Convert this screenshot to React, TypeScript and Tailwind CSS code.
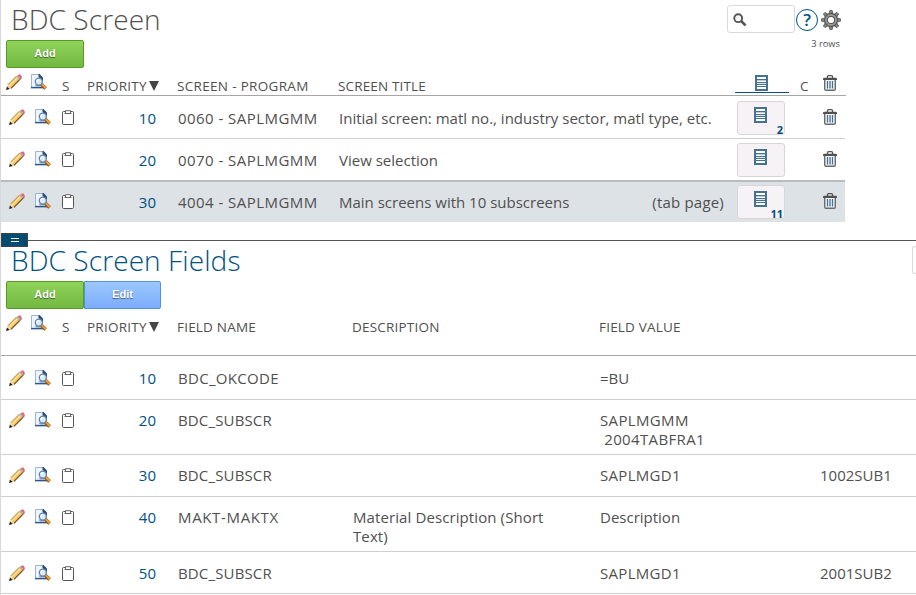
import React from "react";

const Pencil = () => (
  <svg width="16" height="16" viewBox="0 0 16 16" className="block shrink-0">
    <path d="M1 15.2 1.9 10.8 10.4 2.2 13.8 5.6 5.2 14.2Z" fill="#f7c766" />
    <path d="M1.8 10.8 10.6 2" stroke="#a8782f" strokeWidth="0.9" />
    <path d="M2.9 12.1 11.3 3.6" stroke="#ffe6a0" strokeWidth="1.3" />
    <path d="M5 14.3 13.9 5.4" stroke="#6e4a1c" strokeWidth="1.2" />
    <path d="M10.2 2.6 11.5 1.3 14.7 4.5 13.4 5.8Z" fill="#a9b0b8" />
    <path d="M11.5 1.4Q12.8 -.1 14.4.6L15.4 1.7Q16.2 3.3 14.7 4.6Z" fill="#e8686c" />
    <path d="M13.6 5.9 15.7 3.6" stroke="#7a2c30" strokeWidth="0.9" />
    <path d="M.6 15.6 1.9 11.2 5 14.2Z" fill="#ecd9b5" />
    <path d="M.1 16 .9 12.6 3.7 15.1Z" fill="#1d1d1d" />
  </svg>
);

const Preview = () => (
  <svg width="16" height="16" viewBox="0 0 16 16" className="block shrink-0">
    <path d="M.5.5H8L11.5 4V13.5H.5Z" fill="#eef5fd" stroke="#9db6d8" />
    <path d="M7.5 0H8.5L12 3.5V7L7.5 3Z" fill="#2c4d78" />
    <path d="M0 13.6H12" stroke="#2f5686" strokeWidth="1.5" />
    <path d="M3.6 10.6 5 12.5H9.5L10 11" fill="#7f9dc0" />
    <circle cx="7.8" cy="7.6" r="3.5" fill="#d9ecfb" stroke="#6482a6" strokeWidth="1.3" />
    <path d="M6 7.4Q6.3 5.6 8 5.6" stroke="#fff" strokeWidth="1.2" fill="none" />
    <path d="M10.6 10.6 14.6 14.6" stroke="#8a5417" strokeWidth="3.6" />
    <path d="M11 10.4 14.8 14.2" stroke="#f0a03a" strokeWidth="2" />
  </svg>
);

const Clipboard = () => (
  <svg width="13" height="16" viewBox="0 0 13 16" className="block shrink-0">
    <rect x="0.5" y="1.5" width="11" height="13" rx="1.2" fill="#fff" stroke="#555" />
    <rect x="3" y="0" width="6" height="3.5" fill="#fff" />
    <path d="M2.5 3.5H9.5M3.5 3V.7H8.5V3" stroke="#555" fill="none" strokeWidth="0.9" />
  </svg>
);

const List = () => (
  <svg width="13" height="16" viewBox="0 0 13 16" className="block shrink-0" shapeRendering="crispEdges">
    <rect width="13" height="16" fill="#457193" />
    <rect x="2" y="2" width="9" height="2" fill="#fff" />
    <rect x="2" y="5" width="9" height="1" fill="#b9cad7" />
    <rect x="2" y="6" width="9" height="1" fill="#fff" />
    <rect x="2" y="8" width="9" height="1" fill="#dfe7ed" />
    <rect x="2" y="10" width="9" height="1" fill="#fff" />
    <rect x="2" y="12" width="9" height="2" fill="#fff" />
  </svg>
);

const Trash = () => (
  <svg width="14" height="16" viewBox="0 0 14 16" className="block shrink-0">
    <path d="M4.5 3V1.6Q4.5 .7 5.4.7H8.6Q9.5 .7 9.5 1.6V3" fill="none" stroke="#555" strokeWidth="1.3" />
    <path d="M0 5V4Q0 2.7 1.5 2.7H12.5Q14 2.7 14 4V5Z" fill="#505050" />
    <path d="M1.7 5V14Q1.7 15.3 3 15.3H11Q12.3 15.3 12.3 14V5" fill="#f4f6f8" stroke="#6a6a6a" strokeWidth="1.4" />
    <path d="M4.5 6V13.5M7 6V13.5M9.5 6V13.5" stroke="#457193" strokeWidth="1.3" />
  </svg>
);

const Gear = () => (
  <svg width="20" height="20" viewBox="-10 -10 20 20" className="block">
    {[0, 45, 90, 135, 180, 225, 270, 315].map((a) => (
      <path key={a} d="M-2-6-1.1-9.6H1.1L2-6Z" transform={`rotate(${a})`} fill="#858585" stroke="#505050" strokeWidth=".8" />
    ))}
    <circle r="5" fill="none" stroke="#505050" strokeWidth="3.8" />
    <circle r="5" fill="none" stroke="#979797" strokeWidth="2" />
  </svg>
);

const Button = ({ label, blue = false }: { label: string; blue?: boolean }) => (
  <button
    className={`h-7 border pb-0.5 font-['Liberation_Sans',Arial,sans-serif] text-[11px] font-bold text-white [text-shadow:0_1px_1px_rgba(0,0,0,0.5)] ${
      blue
        ? "w-[77px] rounded-r-[2px] border-[#5590e0] bg-linear-to-b from-[#9bc8ff] to-[#7cacfb]"
        : "w-[78px] rounded-[2px] border-[#559c22] bg-linear-to-b from-[#90d35b] to-[#73b840]"
    }`}
  >
    {label}
  </button>
);

const Actions = ({ low = false }: { low?: boolean }) => (
  <div className={`flex w-[76px] shrink-0 pl-[8px] ${low ? "pt-px" : ""}`}>
    <Pencil />
    <div className="ml-[10px]"><Preview /></div>
    <div className="ml-[11px] mt-px"><Clipboard /></div>
  </div>
);

const HeaderLead = () => (
  <>
    <div className="-mt-[4px] flex w-[61px] shrink-0 gap-[9px] pl-[5px]">
      <Pencil />
      <Preview />
    </div>
    <div className="w-[25px] shrink-0">S</div>
    <div className="flex w-[90px] shrink-0">
      <span className="w-[62px] tracking-[0.25px]">PRIORITY</span>
      <svg width="10" height="10" viewBox="0 0 10 10" className="mt-[3px] block"><path d="M0 0H10L5 10Z" fill="#444" /></svg>
    </div>
  </>
);

const LinkBox = ({ count }: { count?: string }) => (
  <div className="relative -mt-[8px] h-[34px] w-12 rounded-[3px] border border-[#d9d6da] bg-[#f6f2f6] pl-[16px] pt-[5px]">
    <List />
    {count && <span className="absolute -bottom-[3px] right-[1px] text-[11px] leading-[15px] font-bold text-[#00517f]">{count}</span>}
  </div>
);

const screens = [
  { n: "10", program: "0060 - SAPLMGMM", title: "Initial screen: matl no., industry sector, matl type, etc.", count: "2", row: "h-[43px] border-b border-[#cfcfcf] pt-[13px]" },
  { n: "20", program: "0070 - SAPLMGMM", title: "View selection", row: "h-[43px] border-b-2 border-[#b7bcc1] pt-[12px]" },
  { n: "30", program: "4004 - SAPLMGMM", title: "Main screens with 10 subscreens", note: "(tab page)", count: "11", row: "h-10 bg-[#dde2e6] pt-[11px]" },
];

const fields = [
  { n: "10", name: "BDC_OKCODE", value: "=BU", row: "h-[44px] pt-[13px]", nameGap: "tracking-[0.3px]", valueGap: "" },
  { n: "20", name: "BDC_SUBSCR", value: "SAPLMGMM\n 2004TABFRA1", row: "h-[55px] pt-[11px]", nameGap: "tracking-[0.15px]", valueGap: "tracking-[0.35px]" },
  { n: "30", name: "BDC_SUBSCR", value: "SAPLMGD1", extra: "1002SUB1", row: "h-[42px] pt-[11px]", nameGap: "tracking-[0.15px]", valueGap: "tracking-[0.3px]" },
  { n: "40", name: "MAKT-MAKTX", desc: "Material Description (Short\nText)", value: "Description", row: "h-[55px] pt-[11px]", nameGap: "tracking-[0.65px]", valueGap: "" },
  { n: "50", name: "BDC_SUBSCR", value: "SAPLMGD1", extra: "2001SUB2", row: "h-[42px] pt-[12px]", nameGap: "tracking-[0.15px]", valueGap: "tracking-[0.3px]" },
];

export default function App() {
  return (
    <div className="h-[595px] w-[916px] overflow-hidden border-l border-[#d8d8d8] bg-white font-['Open_Sans','Noto_Sans',sans-serif] text-[15px] leading-[19px] text-[#505050]">
      <section className="h-[240px]">
        <div className="flex h-10">
          <h1 className="w-[726px] pl-[10px] text-[28px] leading-[38px] font-light tracking-[0.1px]">BDC Screen</h1>
          <div className="mt-[5px] flex h-7 w-[68px] rounded-[3px] border border-[#d9d9d9] pl-[5px] pt-[7px]">
            <svg width="15" height="15" viewBox="0 0 15 15"><circle cx="5.2" cy="5.2" r="3.9" fill="none" stroke="#555" strokeWidth="1.9" /><path d="M8 8 12.6 12.4" stroke="#555" strokeWidth="2.6" /></svg>
          </div>
          <div className="ml-px mt-[9px] flex size-[22px] items-center justify-center rounded-full border border-[#00517f] text-[17px] leading-5 font-semibold text-[#00517f]">?</div>
          <div className="ml-[3px] mt-[10px]"><Gear /></div>
        </div>
        <div className="flex h-7 justify-between pl-[5px] pr-[76px]">
          <Button label="Add" />
          <span className="-mt-[6px] text-[9.3px]">3 rows</span>
        </div>
        <div className="flex h-7 w-[845px] border-b border-[#a6a6a6] pt-[10px] text-[13.5px] leading-[17px]">
          <HeaderLead />
          <div className="w-[161px] tracking-[0.32px]">SCREEN - PROGRAM</div>
          <div className="w-[397px] tracking-[0.15px]">SCREEN TITLE</div>
          <div className="-mt-[3px] h-[18px] w-[54px] border-b border-[#00517f] pl-[20px]"><List /></div>
          <div className="ml-[11px] w-[23px] shrink-0">C</div>
          <div className="-mt-[3px]"><Trash /></div>
        </div>
        {screens.map((s) => (
          <div key={s.n} className={`flex w-[844px] ${s.row}`}>
            <Actions />
            <div className="w-[79px] shrink-0 text-right text-[#00517f]">{s.n}</div>
            <div className="ml-[22px] w-[160px] shrink-0 whitespace-nowrap tracking-[0.45px]">{s.program}</div>
            <div className="flex w-[386px] shrink-0 justify-between pl-px whitespace-nowrap">
              <span>{s.title}</span>
              {s.note && <span className="tracking-[0.2px]">{s.note}</span>}
            </div>
            <div className="ml-[13px] w-[86px] shrink-0"><LinkBox count={s.count} /></div>
            <Trash />
          </div>
        ))}
      </section>
      <section className="relative h-[355px] border-t border-[#555]">
        <div className="absolute -top-[8px] left-0 flex h-[14px] w-[27px] flex-col items-center justify-center gap-[2px] border border-[#444] bg-[#004b6e]">
          <div className="h-px w-2 bg-white" />
          <div className="h-px w-2 bg-white" />
        </div>
        <div className="flex h-10 justify-between">
          <h2 className="pl-[10px] text-[28px] leading-[38px] font-light tracking-[0.1px] text-[#00517f]">BDC Screen Fields</h2>
          <div className="mt-[5px] h-7 w-1 rounded-l-[3px] border border-r-0 border-[#d9d9d9]" />
        </div>
        <div className="flex h-7 pl-[5px]"><Button label="Add" /><Button label="Edit" blue /></div>
        <div className="flex h-[47px] border-b border-[#a6a6a6] pt-[10px] text-[13.5px] leading-[17px] tracking-[0.2px]">
          <HeaderLead />
          <div className="w-[175px]">FIELD NAME</div>
          <div className="w-[247px]">DESCRIPTION</div>
          <div>FIELD VALUE</div>
        </div>
        {fields.map((f) => (
          <div key={f.n} className={`flex border-b border-[#cfcfcf] ${f.row}`}>
            <Actions low />
            <div className="w-[79px] shrink-0 text-right text-[#00517f]">{f.n}</div>
            <div className={`ml-[22px] w-[175px] shrink-0 ${f.nameGap}`}>{f.name}</div>
            <div className="w-[247px] shrink-0 whitespace-pre tracking-[0.1px]">{f.desc}</div>
            <div className={`w-[220px] shrink-0 whitespace-pre ${f.valueGap}`}>{f.value}</div>
            <div>{f.extra}</div>
          </div>
        ))}
      </section>
    </div>
  );
}
